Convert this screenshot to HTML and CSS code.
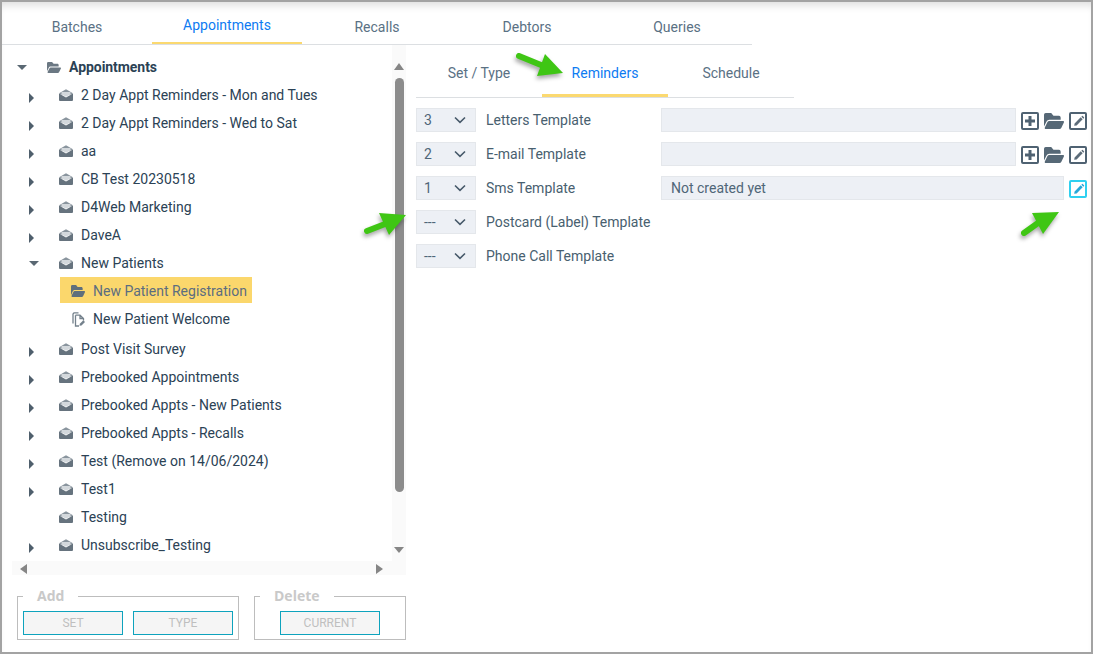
FILE: index.html
```html
<!DOCTYPE html>
<html lang="en">
<head>
<meta charset="utf-8">
<title>Appointments</title>
<link rel="stylesheet" href="styles.css">
</head>
<body>
<svg class="defs" width="0" height="0" aria-hidden="true">
  <symbol id="env" viewBox="0 0 14 12">
    <path d="M0.500 4L7 0.300 13.500 4V5.500H0.500z" fill="#8a959e"/>
    <path d="M2.500 3h9v2.300L7 7.800 2.500 5.300z" fill="#d3d8dc"/>
    <path d="M0 4.600L7 8.600 14 4.600V11a1 1 0 0 1-1 1H1a1 1 0 0 1-1-1z" fill="#66737e"/>
  </symbol>
  <symbol id="folder" viewBox="0 64 576 384" preserveAspectRatio="none"><path d="M572.694 292.093L500.27 416.248A63.997 63.997 0 0 1 444.989 448H45.025c-18.523 0-30.064-20.093-20.731-36.093l72.424-124.155A64 64 0 0 1 152 256h399.964c18.523 0 30.064 20.093 20.73 36.093zM152 224h328v-48c0-26.51-21.49-48-48-48H272l-64-64H48C21.49 64 0 85.49 0 112v278.046l69.077-118.418C86.214 242.25 117.989 224 152 224z"/></symbol>
  <symbol id="pencil" viewBox="0 0 24 24"><path d="M4 20l.8-4.500L16 4.300 19.700 8 8.500 19.200zM17.300 3l1.200-1.200a1 1 0 0 1 1.400 0l2.300 2.300a1 1 0 0 1 0 1.400L21 6.700z"/></symbol>
  <symbol id="plus" viewBox="0 0 12 12"><path d="M4.500 1h3v3.500H11v3H7.500V11h-3V7.500H1v-3h3.500z"/></symbol>
  <symbol id="chev" viewBox="0 0 12 8"><path d="M1 1.500l5 4.800 5-4.800" fill="none" stroke="currentColor" stroke-width="1.600"/></symbol>
</svg>

<div class="frame">
  <nav class="tabs">
    <a class="tab">Batches</a>
    <a class="tab tab-active">Appointments</a>
    <a class="tab">Recalls</a>
    <a class="tab">Debtors</a>
    <a class="tab">Queries</a>
  </nav>

  <div class="content">
    <section class="left">
      <div class="tree-box">
        <ul class="tree">
          <li class="row row-root"><i class="tog tog-down"></i><svg class="ic ic-folder"><use href="#folder"/></svg><span>Appointments</span></li>
          <li class="row"><i class="tog tog-right"></i><svg class="ic ic-env"><use href="#env"/></svg><span>2 Day Appt Reminders - Mon and Tues</span></li>
          <li class="row"><i class="tog tog-right"></i><svg class="ic ic-env"><use href="#env"/></svg><span>2 Day Appt Reminders - Wed to Sat</span></li>
          <li class="row"><i class="tog tog-right"></i><svg class="ic ic-env"><use href="#env"/></svg><span>aa</span></li>
          <li class="row"><i class="tog tog-right"></i><svg class="ic ic-env"><use href="#env"/></svg><span>CB Test 20230518</span></li>
          <li class="row"><i class="tog tog-right"></i><svg class="ic ic-env"><use href="#env"/></svg><span>D4Web Marketing</span></li>
          <li class="row"><i class="tog tog-right"></i><svg class="ic ic-env"><use href="#env"/></svg><span>DaveA</span></li>
          <li class="row"><i class="tog tog-open"></i><svg class="ic ic-env"><use href="#env"/></svg><span>New Patients</span></li>
          <li class="row row-child row-selected"><svg class="ic ic-folder"><use href="#folder"/></svg><span>New Patient Registration</span></li>
          <li class="row row-child row-last"><svg class="ic ic-doc" viewBox="0 0 13 15"><path d="M1 11.500V2L2 .8H6.500M3.500 3.200H8l3.500 3.300v2M3.500 3.200V14H7M8 3.200v3.300h3.500" fill="none" stroke="#74818c" stroke-width="1.300"/><path d="M7.500 13.800l.3-2L11.300 8.300 13 10l-3.500 3.500z" fill="#74818c"/></svg><span>New Patient Welcome</span></li>
          <li class="row"><i class="tog tog-right"></i><svg class="ic ic-env"><use href="#env"/></svg><span>Post Visit Survey</span></li>
          <li class="row"><i class="tog tog-right"></i><svg class="ic ic-env"><use href="#env"/></svg><span>Prebooked Appointments</span></li>
          <li class="row"><i class="tog tog-right"></i><svg class="ic ic-env"><use href="#env"/></svg><span>Prebooked Appts - New Patients</span></li>
          <li class="row"><i class="tog tog-right"></i><svg class="ic ic-env"><use href="#env"/></svg><span>Prebooked Appts - Recalls</span></li>
          <li class="row"><i class="tog tog-right"></i><svg class="ic ic-env"><use href="#env"/></svg><span>Test (Remove on 14/06/2024)</span></li>
          <li class="row"><i class="tog tog-right"></i><svg class="ic ic-env"><use href="#env"/></svg><span>Test1</span></li>
          <li class="row"><svg class="ic ic-env"><use href="#env"/></svg><span>Testing</span></li>
          <li class="row"><i class="tog tog-right"></i><svg class="ic ic-env"><use href="#env"/></svg><span>Unsubscribe_Testing</span></li>
        </ul>
        <div class="vscroll">
          <i class="arrow arrow-up"></i>
          <div class="thumb"></div>
          <i class="arrow arrow-down"></i>
        </div>
      </div>
      <div class="hscroll">
        <i class="arrow arrow-left"></i>
        <i class="arrow arrow-right"></i>
      </div>
      <div class="actions">
        <fieldset class="group group-add">
          <legend>Add</legend>
          <button class="btn" disabled>SET</button>
          <button class="btn" disabled>TYPE</button>
        </fieldset>
        <fieldset class="group group-del">
          <legend>Delete</legend>
          <button class="btn btn-current" disabled>CURRENT</button>
        </fieldset>
      </div>
    </section>

    <section class="right">
      <nav class="subtabs">
        <a class="subtab">Set / Type</a>
        <a class="subtab subtab-active">Reminders</a>
        <a class="subtab">Schedule</a>
      </nav>
      <div class="form">
        <div class="frow">
          <div class="sel"><span>3</span><svg class="chev"><use href="#chev"/></svg></div>
          <label class="lbl">Letters Template</label>
          <div class="inp"></div>
          <div class="tools">
            <span class="ibtn"><svg class="i-plus"><use href="#plus"/></svg></span>
            <svg class="i-folder"><use href="#folder"/></svg>
            <span class="ibtn"><svg class="i-pen"><use href="#pencil"/></svg></span>
          </div>
        </div>
        <div class="frow">
          <div class="sel"><span>2</span><svg class="chev"><use href="#chev"/></svg></div>
          <label class="lbl">E-mail Template</label>
          <div class="inp"></div>
          <div class="tools">
            <span class="ibtn"><svg class="i-plus"><use href="#plus"/></svg></span>
            <svg class="i-folder"><use href="#folder"/></svg>
            <span class="ibtn"><svg class="i-pen"><use href="#pencil"/></svg></span>
          </div>
        </div>
        <div class="frow">
          <div class="sel"><span>1</span><svg class="chev"><use href="#chev"/></svg></div>
          <label class="lbl">Sms Template</label>
          <div class="inp inp-wide">Not created yet</div>
          <div class="tools">
            <span class="ibtn ibtn-cyan"><svg class="i-pen"><use href="#pencil"/></svg></span>
          </div>
        </div>
        <div class="frow">
          <div class="sel"><span>---</span><svg class="chev"><use href="#chev"/></svg></div>
          <label class="lbl">Postcard (Label) Template</label>
        </div>
        <div class="frow">
          <div class="sel"><span>---</span><svg class="chev"><use href="#chev"/></svg></div>
          <label class="lbl">Phone Call Template</label>
        </div>
      </div>
    </section>
  </div>

  <svg class="callouts" viewBox="0 0 1093 654" aria-hidden="true">
    <g class="callout">
      <path d="M519 56L541 65" class="shaft"/><path d="M563 73L545 54L537 76Z"/>
    </g>
    <g class="callout">
      <path d="M367 231L385 224" class="shaft"/><path d="M406 215L379 213L389 235Z"/>
    </g>
    <g class="callout">
      <path d="M1024 233L1038 223" class="shaft"/><path d="M1059 212L1032 213L1043 234Z"/>
    </g>
  </svg>
</div>
</body>
</html>
```
FILE: styles.css
```css
* { box-sizing: border-box; }
html, body { margin: 0; padding: 0; }
body {
  width: 1093px;
  height: 654px;
  overflow: hidden;
  font-family: Roboto, "Liberation Sans", sans-serif;
  font-size: 14px;
  color: #2b4255;
  background: #fff;
}
.defs { position: absolute; }
.frame {
  position: relative;
  width: 1093px;
  height: 654px;
  border: 2px solid #a3a3a3;
  box-shadow: inset 0 8px 8px -5px rgba(0, 0, 0, .14);
  overflow: hidden;
}

/* Top tabs */
.tabs {
  display: flex;
  width: 750px;
  height: 43px;
  border-bottom: 1px solid #dcdfe2;
}
.tab {
  width: 150px;
  height: 42px;
  padding-top: 17px;
  text-align: center;
  line-height: 16px;
  color: #5a7184;
}
.tab-active {
  padding-top: 15px;
  color: #0d7bf2;
  border-bottom: 2px solid #fbd970;
}

.content {
  display: flex;
}

/* Left column */
.left {
  width: 404px;
  padding-left: 10px;
  flex: none;
}
.tree-box {
  display: flex;
  height: 516px;
  padding-left: 2px;
}
.tree {
  list-style: none;
  margin: 0;
  padding: 8px 0 0;
  width: 378px;
}
.row {
  position: relative;
  display: flex;
  align-items: center;
  height: 28px;
  padding-left: 45px;
  white-space: nowrap;
  line-height: 16px;
}
.row-root {
  padding-left: 33px;
  font-weight: 700;
  letter-spacing: -.05px;
}
.row-child { padding-left: 46px; }
.row-last { margin-bottom: 2px; }
.row-selected { color: #5b6d80; }
.row-selected::before {
  content: "";
  position: absolute;
  left: 46px;
  top: 0;
  width: 192px;
  height: 26px;
  background: #fbd76c;
}
.row-selected > * { position: relative; }
.ic { flex: none; margin-right: 8px; }
.ic-env { width: 14px; height: 12px; }
.ic-folder { width: 14px; height: 11px; fill: #6b7883; }
.row-selected .ic-folder { height: 12px; margin-left: 11px; fill: #5f6f7c; }
.ic-doc { width: 13px; height: 15px; margin-left: 12px; }

.tog { position: absolute; display: block; width: 0; height: 0; border-style: solid; border-color: transparent; }
.tog-right { left: 15px; top: 12px; border-width: 5px 0 5px 5px; border-left-color: #4f5f6c; }
.tog-down { left: 3px; top: 12px; border-width: 5px 5px 0; border-top-color: #5a6873; }
.tog-open { left: 15px; top: 12px; border-width: 5px 5px 0; border-top-color: #5a6873; }

.vscroll {
  position: relative;
  display: flex;
  flex-direction: column;
  align-items: center;
  width: 14px;
  background: #fafafa;
  padding-top: 33px;
}
.thumb {
  width: 9px;
  height: 414px;
  border-radius: 5px;
  background: #8c8c8c;
}
.arrow { position: absolute; display: block; width: 0; height: 0; border-style: solid; border-color: transparent; }
.arrow-up { top: 18px; left: 2px; border-width: 0 5px 7px; border-bottom-color: #868686; }
.arrow-down { bottom: 8px; left: 2px; border-width: 6px 5px 0; border-top-color: #868686; }

.hscroll {
  position: relative;
  width: 394px;
  height: 14px;
  background: #fafafa;
}
.arrow-left { left: 8px; top: 3px; border-width: 5px 7px 5px 0; border-right-color: #868686; }
.arrow-right { right: 23px; top: 3px; border-width: 5px 0 5px 7px; border-left-color: #868686; }

.actions {
  display: flex;
  gap: 15px;
  padding: 11px 0 0 5px;
}
.group {
  margin: 0;
  padding: 5px 5px 4px;
  border: 1px solid #bdbdbd;
  display: flex;
  gap: 10px;
  height: 54px;
  min-width: 0;
}
.group legend {
  padding: 0 14px;
  font-family: "Open Sans", Roboto, sans-serif;
  font-weight: 700;
  font-size: 14px;
  line-height: 20px;
  color: #c9c9c9;
}
.group-add { width: 222px; }
.group-del { width: 152px; }
.btn {
  width: 100px;
  height: 24px;
  padding: 0;
  border: 1px solid #0ea3bd;
  background: #f5f5f5;
  color: #bfbfbf;
  font-family: Roboto, sans-serif;
  font-size: 12px;
}
.btn-current { margin-left: 20px; }

/* Right column */
.right {
  flex: 1;
  padding: 4px 0 0 10px;
  min-width: 0;
}
.subtabs {
  display: flex;
  width: 378px;
  height: 49px;
  border-bottom: 1px solid #dcdfe2;
}
.subtab {
  width: 126px;
  height: 48px;
  padding-top: 16px;
  text-align: center;
  line-height: 16px;
  color: #5a7184;
}
.subtab-active {
  color: #0d7bf2;
  border-bottom: 3px solid #fbd970;
}
.form {
  display: flex;
  flex-direction: column;
  gap: 10px;
  padding-top: 10px;
}
.frow {
  display: flex;
  align-items: center;
  height: 24px;
}
.sel {
  display: flex;
  align-items: center;
  justify-content: space-between;
  width: 60px;
  height: 24px;
  padding: 0 9px 0 7px;
  background: #edf0f5;
  border: 1px solid #e4e7eb;
  color: #4f6678;
}
.chev { width: 12px; height: 8px; color: #47596a; }
.lbl {
  width: 175px;
  margin-left: 10px;
  color: #48606f;
  white-space: nowrap;
}
.inp {
  width: 355px;
  height: 24px;
  padding: 0 9px;
  line-height: 22px;
  background: #edf0f5;
  border: 1px solid #e4e7eb;
  color: #4f6678;
}
.inp-wide { width: 403px; }
.tools {
  display: flex;
  align-items: center;
  gap: 5px;
  margin-left: 5px;
  padding-top: 2px;
}
.ibtn {
  display: flex;
  align-items: center;
  justify-content: center;
  width: 18px;
  height: 18px;
  border: 2px solid #4f6272;
  border-radius: 2px;
  fill: #4f6272;
}
.ibtn-cyan { border-color: #2fd0f0; fill: #27a7d8; }
.i-plus { width: 12px; height: 12px; }
.i-pen { width: 13px; height: 13px; fill: #5c6c79; }
.ibtn-cyan .i-pen { fill: #27a7d8; }
.i-folder { width: 20px; height: 16px; fill: #566876; }

/* Annotation arrows */
.callouts {
  position: absolute;
  left: -2px;
  top: -2px;
  width: 1093px;
  height: 654px;
  pointer-events: none;
}
.callout { fill: #3fc614; filter: drop-shadow(-1px 3px 2px rgba(0, 0, 0, .35)); }
.shaft { fill: none; stroke: #3fc614; stroke-width: 6; stroke-linecap: round; }
```
